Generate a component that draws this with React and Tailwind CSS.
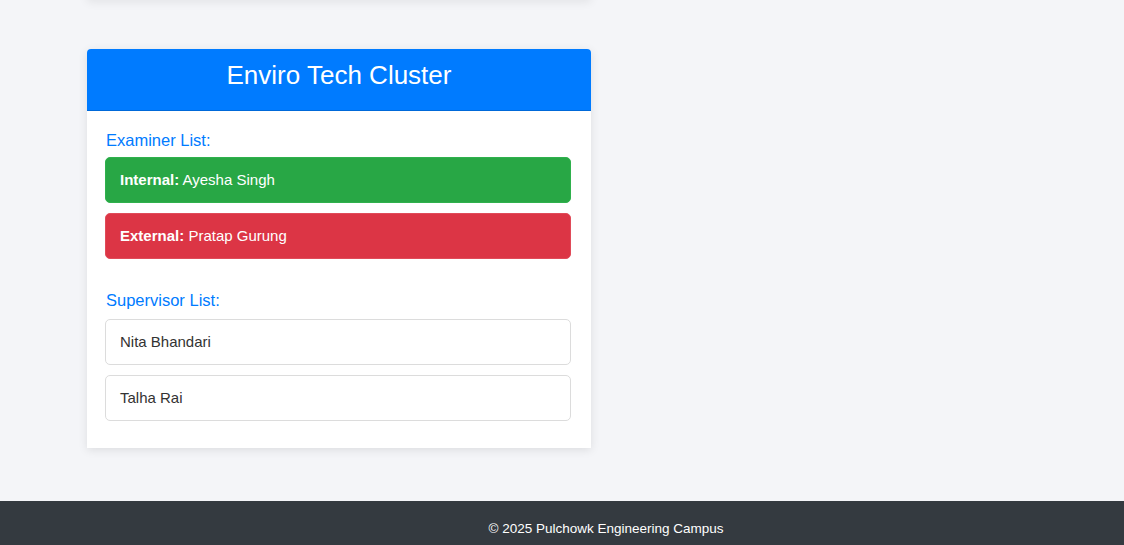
export default function App() {
  const examiners = [
    { label: 'Internal:', name: 'Ayesha Singh', color: 'bg-[#28a745] border-[#2fb14d]' },
    { label: 'External:', name: 'Pratap Gurung', color: 'bg-[#dc3545] border-[#e04b59]' },
  ]
  const supervisors = ['Nita Bhandari', 'Talha Rai']

  return (
    <div className="min-h-screen bg-[#f4f5f8] flex flex-col font-['Liberation_Sans',Arial,sans-serif]">
      <main className="flex-1 px-[87px]">
        {/* previous card edge */}
        <div className="w-[504px] h-[10px] -mt-[10px] bg-white shadow-[0_2px_10px_rgba(0,0,0,0.08)]" />

        <div className="w-[504px] mt-[49px] bg-white rounded-t-[4px] shadow-[0_2px_10px_rgba(0,0,0,0.1)] overflow-hidden">
          <div className="bg-[#007bff] h-[62px] flex items-center justify-center border-b border-[#0069d9]">
            <h3 className="text-white text-[26px] leading-none -mt-[10px]">Enviro Tech Cluster</h3>
          </div>

          <div className="pl-[18px] pr-[20px] pt-[17px] pb-[27px]">
            <h5 className="text-[#007bff] text-[16.5px] leading-[24px] mb-[5px] ml-[1px]">Examiner List:</h5>
            <div className="flex flex-col gap-[10px]">
              {examiners.map(e => (
                <div
                  key={e.label}
                  className={`${e.color} border rounded-[5px] text-white text-[15px] leading-[22px] px-[14px] py-[11px]`}
                >
                  <strong className="font-bold">{e.label}</strong> {e.name}
                </div>
              ))}
            </div>

            <h5 className="text-[#007bff] text-[16.5px] leading-[24px] mt-[29px] mb-[7px] ml-[1px]">Supervisor List:</h5>
            <div className="flex flex-col gap-[10px]">
              {supervisors.map(s => (
                <div
                  key={s}
                  className="border border-[#dcdcdc] rounded-[5px] text-[#333] text-[15px] leading-[22px] px-[14px] py-[11px]"
                >
                  {s}
                </div>
              ))}
            </div>
          </div>
        </div>
      </main>

      <footer className="bg-[#343a40] mt-[53px] pt-[18px] pb-[18px] pl-[88px] text-center text-white text-[13.5px] leading-[20px]">
        © 2025 Pulchowk Engineering Campus
      </footer>
    </div>
  )
}
